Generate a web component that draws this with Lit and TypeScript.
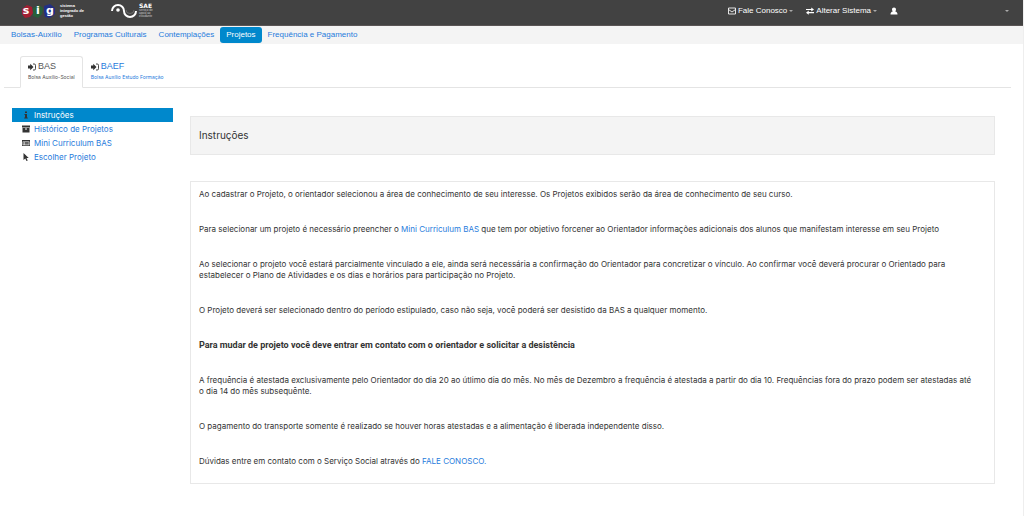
import { LitElement, html, css, svg, nothing } from "lit";
import { customElement, state } from "lit/decorators.js";

const icons = {
  envelope: svg`<svg class="icon" viewBox="0 0 16 16"><path d="M1 2h14v12H1z M1 5l7 5 7-5" fill="none" stroke="currentColor" stroke-width="1.700"/></svg>`,
  exchange: svg`<svg class="icon" viewBox="0 0 16 16"><path d="M0 4h10.500V1L16 5l-5.500 4V6H0z M16 10H5.500V7L0 11.500 5.500 15.500V12.500H16z" fill="currentColor"/></svg>`,
  user: svg`<svg class="icon" viewBox="0 0 16 16"><path d="M8 1c2.500 0 4 1.800 4 4.200 0 1.600-.6 3-1.500 3.800 2.800.6 4.500 2.500 4.500 6H1c0-3.500 1.700-5.400 4.500-6C4.600 8.200 4 6.800 4 5.200 4 2.800 5.500 1 8 1z" fill="currentColor"/></svg>`,
  signIn: svg`<svg class="icon" viewBox="0 0 16 16"><path d="M0 5h4.500V1.500L11 8l-6.500 6.500V11H0z" fill="currentColor"/><path d="M10 2h2.500a2.500 2.500 0 0 1 2.500 2.500v7a2.500 2.500 0 0 1-2.500 2.500H10" fill="none" stroke="currentColor" stroke-width="1.800"/></svg>`,
  info: svg`<svg class="icon" viewBox="0 0 16 16"><path d="M6 1h4v3H6z M5 6h5v7h1.500v2h-7v-2H6V8H5z" fill="currentColor"/></svg>`,
  archive: svg`<svg class="icon" viewBox="0 0 16 16"><path d="M0 1h16v4H0z M1 6h14v9H1z M6 7.200v1.600h4V7.200z" fill="currentColor" fill-rule="evenodd"/></svg>`,
  list: svg`<svg class="icon" viewBox="0 0 16 16"><path d="M0 2h16v12H0z M1.300 5v7.700h13.400V5z M2.500 6h1.500v1.300H2.500z M5 6h8.500v1.300H5z M2.500 8.200h1.500v1.300H2.500z M5 8.200h8.500v1.300H5z M2.500 10.400h1.500v1.300H2.500z M5 10.400h8.500v1.300H5z" fill="currentColor" fill-rule="evenodd"/></svg>`,
  pointer: svg`<svg class="icon" viewBox="0 0 16 16"><path d="M3 0l10.500 10H9l2.500 5-2.600 1L6.600 11 3 14z" fill="currentColor"/></svg>`,
};

const sections = ["Bolsas-Auxílio", "Programas Culturais", "Contemplações", "Projetos", "Frequência e Pagamento"];

const tabs = [
  { name: "BAS", detail: "Bolsa Auxílio-Social" },
  { name: "BAEF", detail: "Bolsa Auxílio Estudo Formação" },
];

const menu = [
  { icon: icons.info, label: "Instruções" },
  { icon: icons.archive, label: "Histórico de Projetos" },
  { icon: icons.list, label: "Mini Curriculum BAS" },
  { icon: icons.pointer, label: "Escolher Projeto" },
];

@customElement("app-root")
export class AppRoot extends LitElement {
  @state() private section = "Projetos";
  @state() private tab = "BAS";
  @state() private page = "Instruções";

  static styles = css`
    :host {
      display: block;
      box-sizing: border-box;
      min-height: 100vh;
      border-right: 1px solid #eee;
      background: #fff;
      color: #333;
      font: 8px/11px "Liberation Sans", Arial, sans-serif;
    }
    * { box-sizing: border-box; }
    a { color: #1f7bdc; text-decoration: none; }
    a:hover { text-decoration: underline; }
    button { font: inherit; color: inherit; background: none; border: 0; padding: 0; cursor: pointer; }
    ul { list-style: none; margin: 0; padding: 0; }
    .icon { width: 8px; height: 8px; flex: none; display: block; }

    .topbar {
      display: flex;
      align-items: center;
      height: 26px;
      padding: 0 14px 4px 20px;
      background: #424242;
      border-bottom: 1px solid #5a5555;
      color: #fff;
    }
    .brand { display: flex; align-items: center; gap: 4px; color: #fff; }
    .brand:hover { text-decoration: none; }
    .sae { margin-left: 27px; gap: 2px; }
    .sig { position: relative; display: flex; width: 36px; height: 16px; }
    .blobs { position: absolute; inset: 0; width: 36px; height: 16px; }
    .letter { position: relative; flex: 1; text-align: center; font: bold 11px/16px "DejaVu Sans", sans-serif; }
    .tiny { display: block; font: bold 4px/5px "Liberation Sans", sans-serif; }
    .wave { width: 26px; height: 16px; display: block; }
    .sae-name { display: block; font: bold 6px/6px "DejaVu Sans", sans-serif; }
    .sae-detail { display: block; font-size: 3px; line-height: 3px; color: #ccc; }
    .actions { display: flex; align-items: center; margin-left: auto; gap: 13px; }
    .action { display: flex; align-items: center; gap: 2px; }
    .caret { border: 2px solid transparent; border-top-color: #aaa; border-bottom: 0; }
    .account { width: 119px; justify-content: space-between; }

    .sections { display: flex; align-items: center; height: 18px; padding: 0 5px; background: #f4f4f4; }
    .section { padding: 2px 6px 3px; line-height: 11px; border-radius: 3px; }
    .section.on { background: #0088cc; color: #fff; }

    .tabs { display: flex; margin: 12px 12px 0 4px; padding-left: 16px; border-bottom: 1px solid #e4e4e4; }
    .tab {
      display: block;
      padding: 4px 7px 5px;
      margin-bottom: -1px;
      border: 1px solid transparent;
      border-radius: 3px 3px 0 0;
    }
    .tab:hover { text-decoration: none; }
    .tab.on { color: #555; border-color: #e4e4e4; border-bottom-color: #fff; background: #fff; }
    .tab-name { display: flex; align-items: center; gap: 2px; font-size: 9px; line-height: 11px; }
    .tab-name .icon { color: #333; }
    .tab-detail { display: block; font: 5px/10px Inter, "Liberation Sans", sans-serif; }

    .body {
      display: grid;
      grid-template-columns: 1fr 5fr;
      column-gap: 17px;
      padding: 20px 28px 32px 12px;
      font-family: Inter, "Liberation Sans", sans-serif;
    }
    .item { display: flex; align-items: center; gap: 4px; height: 14px; padding-left: 10px; }
    .item .icon { color: #333; }
    .item.on { background: #0088cc; color: #fff; }
    .title {
      margin: 8px 0 26px;
      padding: 12px 8px 13px;
      border: 1px solid #e8e8e8;
      background: #f4f4f4;
      font-size: 10px;
      line-height: 12px;
      font-weight: normal;
    }
    .text { display: grid; gap: 24px; padding: 7px 16px 16px 8px; border: 1px solid #e8e8e8; }
    p { margin: 0; }
    strong { font: bold 9px/11px Roboto, "Liberation Sans", sans-serif; }
  `;

  private pick(e: Event, key: "section" | "tab" | "page", value: string) {
    e.preventDefault();
    (this as any)[key] = value;
  }

  render() {
    return html`
      <header class="topbar">
        <a class="brand" href="#">
          <span class="sig">
            <svg class="blobs" viewBox="0 0 36 16">
              <path d="M2 6l5-4 5 2 1 6-3 4-5 1-3-4z" fill="#a31f33" />
              <path d="M13 5l6-3 4 3-1 6-4 4-5-2z" fill="#27603a" />
              <path d="M24 3l6-2 5 4v6l-5 4-5-1-1-5z" fill="#222f86" />
            </svg>
            <span class="letter">s</span><span class="letter">i</span><span class="letter">g</span>
          </span>
          <span><span class="tiny">sistema</span><span class="tiny">integrado de</span><span class="tiny">gestão</span></span>
        </a>
        <a class="brand sae" href="#">
          <svg class="wave" viewBox="0 0 26 16">
            <path d="M1 8a6 6 0 0 1 12 0a6 6 0 0 0 12 0" fill="none" stroke="#fff" stroke-width="2" />
            <circle cx="7" cy="7" r="1.800" fill="#fff" />
            <path d="M15 7a4 3.500 0 0 0 8 0" fill="none" stroke="#777" stroke-width=".8" />
          </svg>
          <span>
            <span class="sae-name">SAE</span>
            <span class="sae-detail">serviço de</span><span class="sae-detail">apoio ao</span><span class="sae-detail">estudante</span>
          </span>
        </a>
        <div class="actions">
          <button class="action">${icons.envelope}Fale Conosco<span class="caret"></span></button>
          <button class="action">${icons.exchange}Alterar Sistema<span class="caret"></span></button>
          <button class="action account" aria-label="Conta">${icons.user}<span class="caret"></span></button>
        </div>
      </header>
      <nav class="sections">
        ${sections.map((s) => html`<a href="#" class="section ${s === this.section ? "on" : ""}"
          aria-current=${s === this.section ? "page" : nothing}
          @click=${(e: Event) => this.pick(e, "section", s)}>${s}</a>`)}
      </nav>
      <nav class="tabs">
        ${tabs.map((t) => html`<a href="#" class="tab ${t.name === this.tab ? "on" : ""}"
          @click=${(e: Event) => this.pick(e, "tab", t.name)}>
          <span class="tab-name">${icons.signIn}${t.name}</span>
          <span class="tab-detail">${t.detail}</span></a>`)}
      </nav>
      <div class="body">
        <ul>
          ${menu.map((m) => html`<li><a href="#" class="item ${m.label === this.page ? "on" : ""}"
            @click=${(e: Event) => this.pick(e, "page", m.label)}>${m.icon}${m.label}</a></li>`)}
        </ul>
        <main>
          <h1 class="title">Instruções</h1>
          <div class="text">
            <p>Ao cadastrar o Projeto, o orientador selecionou a área de conhecimento de seu interesse. Os Projetos exibidos serão da área de conhecimento de seu curso.</p>
            <p>Para selecionar um projeto é necessário preencher o <a href="#">Mini Curriculum BAS</a> que tem por objetivo forcener ao Orientador informações adicionais dos alunos que manifestam interesse em seu Projeto</p>
            <p>Ao selecionar o projeto você estará parcialmente vinculado a ele, ainda será necessária a confirmação do Orientador para concretizar o vínculo. Ao confirmar você deverá procurar o Orientado para estabelecer o Plano de Atividades e os dias e horários para participação no Projeto.</p>
            <p>O Projeto deverá ser selecionado dentro do período estipulado, caso não seja, você poderá ser desistido da BAS a qualquer momento.</p>
            <p><strong>Para mudar de projeto você deve entrar em contato com o orientador e solicitar a desistência</strong></p>
            <p>A frequência é atestada exclusivamente pelo Orientador do dia 20 ao útlimo dia do mês. No mês de Dezembro a frequência é atestada a partir do dia 10. Frequências fora do prazo podem ser atestadas até o dia 14 do mês subsequênte.</p>
            <p>O pagamento do transporte somente é realizado se houver horas atestadas e a alimentação é liberada independente disso.</p>
            <p>Dúvidas entre em contato com o Serviço Social através do <a href="#">FALE CONOSCO.</a></p>
          </div>
        </main>
      </div>
    `;
  }
}
